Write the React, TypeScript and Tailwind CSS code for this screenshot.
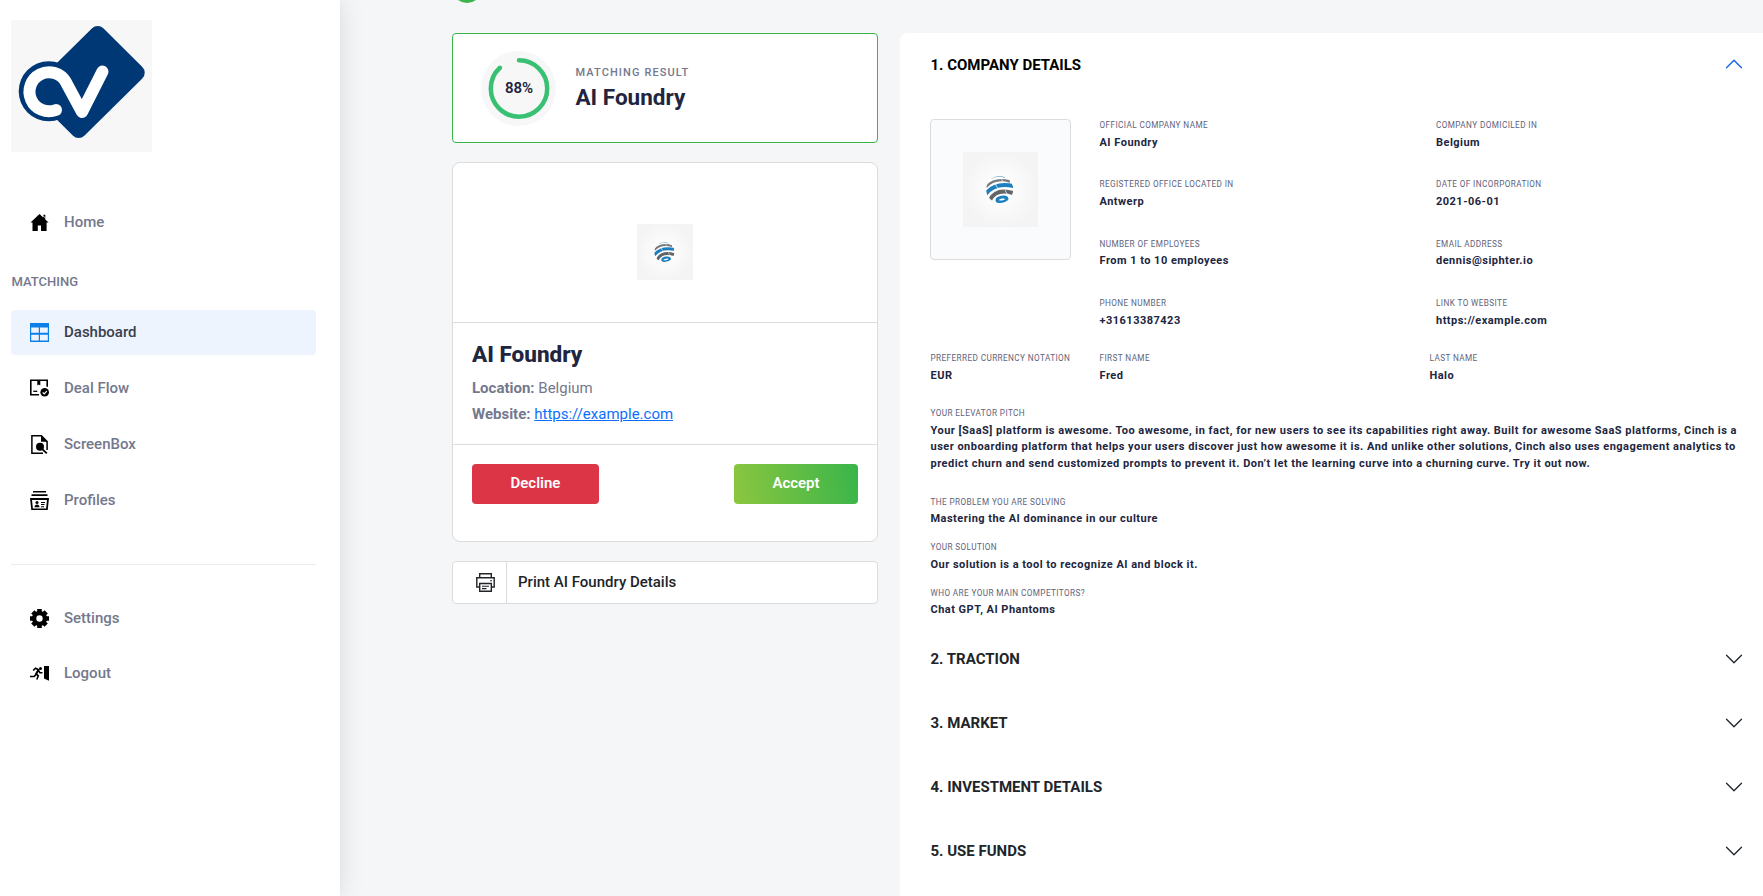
import React from "react";

const navItems = [
  { label: "Dashboard", icon: <TableIcon />, active: true },
  { label: "Deal Flow", icon: <DealIcon /> },
  { label: "ScreenBox", icon: <FileSearchIcon /> },
  { label: "Profiles", icon: <ProfilesIcon /> },
];

const details = [
  ["Official company name", "AI Foundry"],
  ["Company domiciled in", "Belgium"],
  ["Registered office located in", "Antwerp"],
  ["Date of incorporation", "2021-06-01"],
  ["Number of employees", "From 1 to 10 employees"],
  ["Email address", "dennis@siphter.io"],
  ["Phone number", "+31613387423"],
  ["Link to website", "https://example.com"],
];

function HomeIcon() {
  return (
    <svg width="19" height="19" viewBox="0 0 19 19">
      <path d="M9.5 1 0.5 9.6h2V18h5.3v-5.6h3.2V18h5.6V9.6h2l-3.3-3.2V1.8h-2V4.400z" />
      <path d="m12 1.700 4 4" stroke="#fff" strokeWidth="0.8" />
    </svg>
  );
}

function TableIcon() {
  return (
    <svg width="19" height="19" viewBox="0 0 19 19">
      <path d="M0 0h19v19H0z" fill="#0d7fe8" />
      <path d="M1.200 4.500h7.600v5.300H1.200zM10 4.500h7.800v5.300H10zM1.200 11.800h7.600v5.800H1.200zM10 11.800h7.800v5.800H10z" fill="#edf4fd" />
    </svg>
  );
}

function DealIcon() {
  return (
    <svg width="19" height="19" viewBox="0 0 19 19" fill="none" stroke="#000">
      <path d="M9 15.700H.8V1.300h16.400v6.500" strokeWidth="1.600" />
      <path d="M7.300 1h3v5.500l-1.500-1-1.500 1z" fill="#000" stroke="none" />
      <path d="M3.300 12.300h4" strokeWidth="1.300" />
      <circle cx="14.700" cy="13.300" r="4.300" fill="#000" stroke="none" />
      <path d="m12.700 13.300 1.500 1.500 2.600-2.700" stroke="#fff" strokeWidth="1.200" />
    </svg>
  );
}

function FileSearchIcon() {
  return (
    <svg width="19" height="19" viewBox="0 0 19 19" fill="none" stroke="#000">
      <path d="M13 18.200H1.900V.8h9.500l5.700 5.700V15" strokeWidth="1.500" />
      <path d="M11 .5v6.300h6.500z" fill="#000" stroke="none" />
      <circle cx="10" cy="11.800" r="4" fill="#000" stroke="none" />
      <path d="m12 13.800 4.800 4.500" strokeWidth="1.800" />
    </svg>
  );
}

function ProfilesIcon() {
  return (
    <svg width="19" height="19" viewBox="0 0 19 19">
      <path d="M3 0h13v1.400H3zM1.500 3.300h16v1.800h-16zM0 7h19l-1.300 12H1.300z" />
      <path d="M2 9h15l-.9 8.400H2.900z" fill="#fff" />
      <circle cx="7" cy="11.500" r="1.500" />
      <path d="M4.500 16.200c0-3.600 5-3.600 5 0zM11 11h4v1.100h-4zM11 13.100h3.500v1H11zM11 15.200h3v1h-3z" />
    </svg>
  );
}

function GearIcon() {
  return (
    <svg width="19" height="19" viewBox="0 0 19 19">
      <circle cx="9.500" cy="9.500" r="5.400" fill="none" stroke="#000" strokeWidth="4.400" />
      <g stroke="#000" strokeWidth="4.600">
        <path d="M9.500 0v4M9.500 15v4M0 9.500h4M15 9.500h4M2.800 2.800l2.600 2.600M13.600 13.600l2.600 2.600M2.800 16.200l2.600-2.600M13.600 5.400l2.600-2.600" />
      </g>
    </svg>
  );
}

function LogoutIcon() {
  return (
    <svg width="19" height="19" viewBox="0 0 19 19" fill="none" stroke="#000">
      <path d="M14 2h5v14.800l-5-2.300z" fill="#000" stroke="none" />
      <circle cx="10.500" cy="4.400" r="1.500" fill="#000" stroke="none" />
      <path d="M3.200 6.500 5.500 4.200l3 1.500-2.300 4.500-2 2.300H0" strokeWidth="1.700" />
      <path d="M8.300 6 6 9.800l2.300 2L6.800 15.500M8.600 6.500l1.300 2.300h2.600" strokeWidth="1.600" />
    </svg>
  );
}

function PrinterIcon() {
  return (
    <svg width="19" height="19" viewBox="0 0 19 19" fill="none" stroke="#212529" strokeWidth="1.400">
      <path d="M3.700 4.800V.8h11.600v4M3.700 14H.8V4.800h17.400V14h-2.900" />
      <path d="M3.700 10.500h11.600v7.700H3.700z" />
      <path d="M6 13.200h7M6 15.600h4.500" strokeWidth="1.100" />
      <path d="M14.300 7.600h1.500" strokeWidth="1.200" />
    </svg>
  );
}

function Chevron({ up = false }: { up?: boolean }) {
  return (
    <svg width="20" height="20" viewBox="0 0 16 16" fill={up ? "#0c63e4" : "#212529"} className={up ? "-mt-0.5 rotate-180" : "-mt-px"}>
      <path
        fillRule="evenodd"
        d="M1.646 4.646a.5.5 0 0 1 .708 0L8 10.293l5.646-5.647a.5.5 0 0 1 .708.708l-6 6a.5.5 0 0 1-.708 0l-6-6a.5.5 0 0 1 0-.708z"
      />
    </svg>
  );
}

function BrandLogo() {
  return (
    <svg width="141" height="132" viewBox="0 0 141 132" className="block bg-[#f7f7f7]">
      <path d="M86.700 14 125.700 52.700 67.700 110 28.700 71.300z" fill="#003876" stroke="#003876" strokeWidth="16" strokeLinejoin="round" />
      <circle cx="37.700" cy="71.300" r="30" fill="#003876" />
      <path
        d="M45 90A19.500 19.500 0 1 1 54.900 62.100L71 92 91.500 51.500"
        fill="none"
        stroke="#fff"
        strokeWidth="12"
        strokeLinecap="round"
        strokeLinejoin="round"
      />
    </svg>
  );
}

function CompanyLogo({ size }: { size: number }) {
  return (
    <svg width={size} height={size} viewBox="0 0 75 75" className="block">
      <defs>
        <radialGradient id="backdrop">
          <stop offset="0.300" stopColor="#fdfdfd" />
          <stop offset="1" stopColor="#f4f4f4" />
        </radialGradient>
        <clipPath id="globe">
          <circle cx="36.700" cy="37.500" r="13.500" />
        </clipPath>
      </defs>
      <path d="M0 0h75v75H0z" fill="url(#backdrop)" />
      <g clipPath="url(#globe)" fill="none">
        <path d="M28 26.500Q35 22.500 42 25.500" stroke="#7fb2cf" strokeWidth="1.200" />
        <path d="M23 35Q32 25 47 29.500" stroke="#77787b" strokeWidth="2.400" />
        <path d="M22.500 42.500Q31 30 50.500 34" stroke="#1c7fc0" strokeWidth="4" />
        <path d="M27 48Q33 36 50 41" stroke="#636468" strokeWidth="4" />
        <ellipse cx="39" cy="47.500" rx="5" ry="2.400" stroke="#1c7fc0" strokeWidth="3" transform="rotate(-10 39 47.500)" />
        <path d="m32 31 2.500 5M38 26l2 4M42 38l2.500 5" stroke="#fff" strokeWidth="0.700" />
      </g>
    </svg>
  );
}

function NavItem({ label, icon, active = false }: { label: string; icon: React.ReactNode; active?: boolean }) {
  return (
    <a
      className={
        active
          ? "flex h-[45px] items-center gap-[15px] rounded bg-[#edf4fd] pl-[19px] text-[15px] font-medium text-[#3a3f4d]"
          : "flex h-[45px] items-center gap-[15px] rounded pl-[19px] text-[15px] font-medium text-[#74788d]"
      }
    >
      {icon}
      {label}
    </a>
  );
}

function Sidebar() {
  return (
    <aside className="relative z-10 w-[340px] shrink-0 bg-white pt-5 pr-6 pl-[11px] shadow-[0_0_24px_rgba(0,0,0,0.12)]">
      <BrandLogo />
      <nav className="mt-12">
        <NavItem label="Home" icon={<HomeIcon />} />
        <p className="mt-[27px] mb-[17px] pl-[0.5px] text-[13px] leading-5 font-medium text-[#74788d] uppercase">Matching</p>
        <div className="flex flex-col gap-[11px] pt-px">
          {navItems.map((item) => (
            <NavItem key={item.label} {...item} />
          ))}
        </div>
        <hr className="mt-[41px] mb-[31px] border-[#ebebee]" />
        <div className="flex flex-col gap-[10px]">
          <NavItem label="Settings" icon={<GearIcon />} />
          <NavItem label="Logout" icon={<LogoutIcon />} />
        </div>
      </nav>
    </aside>
  );
}

function MatchScore({ value }: { value: number }) {
  const length = 2 * Math.PI * 28.2;
  return (
    <div className="relative flex size-[75px] items-center justify-center rounded-full bg-[#f7f7f7]">
      <svg width="75" height="75" viewBox="0 0 75 75" className="absolute inset-0">
        <circle
          cx="38"
          cy="37.500"
          r="28.200"
          fill="none"
          stroke="#38c172"
          strokeWidth="4.500"
          strokeLinecap="round"
          strokeDasharray={`${(length * value) / 100} ${length}`}
          transform="rotate(-90 38 37.500)"
        />
      </svg>
      <span className="relative pl-px text-[15px] font-semibold text-[#212540]">{value}%</span>
    </div>
  );
}

function Field({ label, children }: { label: string; children: React.ReactNode }) {
  return (
    <div>
      <p className="-mt-px mb-px text-[8.2px] leading-[16.5px] tracking-[0.4px] text-[#5f637a] uppercase">{label}</p>
      <p className="text-[11px] leading-[16.5px] font-bold tracking-[0.48px] text-[#212540]">{children}</p>
    </div>
  );
}

function Summary() {
  return (
    <section className="flex w-[426px] shrink-0 flex-col">
      <div className="mt-[-27px] ml-0 size-[30px] rounded-full bg-[#3bb54a]"></div>
      <div className="mt-[30px] flex h-[110px] items-center gap-[19px] rounded border border-[#3bb54a] bg-white pl-7">
        <MatchScore value={88} />
        <div className="pl-[0.5px]">
          <p className="text-[11px] leading-4 font-medium tracking-[1.1px] text-[#74788d] uppercase">Matching result</p>
          <h2 className="mt-0.5 text-[22.5px] leading-7 font-bold text-[#212540]">AI Foundry</h2>
        </div>
      </div>
      <div className="mt-[19px] h-[380px] rounded-lg border border-[#dcdcdc] bg-white">
        <div className="flex h-[160px] justify-center border-b border-[#dcdcdc] pt-[61px]">
          <CompanyLogo size={56} />
        </div>
        <div className="h-[122px] border-b border-[#dcdcdc] px-[19px] pt-[15px] text-[15px] text-[#74788d]">
          <h2 className="text-[22.5px] leading-8 font-extrabold text-[#212540]">AI Foundry</h2>
          <p className="mt-[5px] leading-[26px]">
            <b>Location:</b> Belgium
          </p>
          <p className="leading-[26px]">
            <b>Website:</b> <a className="text-[#0d6efd] underline">https://example.com</a>
          </p>
        </div>
        <div className="flex justify-between px-[19px] pt-[19px] text-[15px] font-semibold text-white">
          <button className="h-10 w-[127px] rounded bg-[#dc3545] pb-0.5">Decline</button>
          <button className="h-10 w-[124px] rounded bg-linear-[80deg] from-[#8cc63f] to-[#39b54a] pb-0.5">Accept</button>
        </div>
      </div>
      <button className="mt-[19px] flex h-[43px] items-stretch rounded border border-[#dcdcdc] bg-white text-[15px] font-medium text-[#212529]">
        <span className="flex w-[54px] items-center border-r border-[#dcdcdc] pl-[23px]">
          <PrinterIcon />
        </span>
        <span className="flex items-center pl-[11px]">Print AI Foundry Details</span>
      </button>
    </section>
  );
}

function CompanyDetails() {
  return (
    <section className="mt-[33px] flex-1 rounded-tl-lg bg-white pl-[30px]">
      <div className="flex h-16 items-center justify-between pr-[19px] pl-[0.5px] text-[15px] font-bold text-black">
        1. COMPANY DETAILS
        <Chevron up />
      </div>
      <div className="mt-[21px] flex">
        <div className="mt-px flex size-[141px] shrink-0 items-center justify-center rounded border border-[#dcdcdc] bg-[#fafbfd]">
          <CompanyLogo size={75} />
        </div>
        <div className="ml-[28.500px] grid grid-cols-[336.500px_300px] gap-y-[26.400px]">
          {details.map(([label, value]) => (
            <Field key={label} label={label}>
              {value}
            </Field>
          ))}
        </div>
      </div>
      <div className="mt-[22px] grid grid-cols-[169px_330px_300px] pl-[0.5px]">
        <Field label="Preferred currency notation">EUR</Field>
        <Field label="First name">Fred</Field>
        <Field label="Last name">Halo</Field>
      </div>
      <div className="mt-[22px] w-[812px] pl-[0.5px]">
        <Field label="Your elevator pitch">
          Your [SaaS] platform is awesome. Too awesome, in fact, for new users to see its capabilities right away. Built for awesome
          SaaS platforms, Cinch is a user onboarding platform that helps your users discover just how awesome it is. And unlike other
          solutions, Cinch also uses engagement analytics to predict churn and send customized prompts to prevent it. Don’t let the
          learning curve into a churning curve. Try it out now.
        </Field>
      </div>
      <div className="mt-[22.500px] flex flex-col gap-[12.500px] pl-[0.5px]">
        <Field label="The problem you are solving">Mastering the AI dominance in our culture</Field>
        <Field label="Your solution">Our solution is a tool to recognize AI and block it.</Field>
        <Field label="Who are your main competitors?">Chat GPT, AI Phantoms</Field>
      </div>
      <div className="mt-[9px]">
        {["2. TRACTION", "3. MARKET", "4. INVESTMENT DETAILS", "5. USE FUNDS"].map((title) => (
          <div key={title} className="flex h-16 items-center justify-between pr-[19px] pl-[0.5px] text-[15px] font-bold text-[#212529]">
            {title}
            <Chevron />
          </div>
        ))}
      </div>
    </section>
  );
}

export default function App() {
  return (
    <div className="flex h-[896px] overflow-hidden bg-[#f5f6f8] font-[Roboto,sans-serif]">
      <Sidebar />
      <main className="flex flex-1 gap-[22px] pl-[112px]">
        <Summary />
        <CompanyDetails />
      </main>
    </div>
  );
}
